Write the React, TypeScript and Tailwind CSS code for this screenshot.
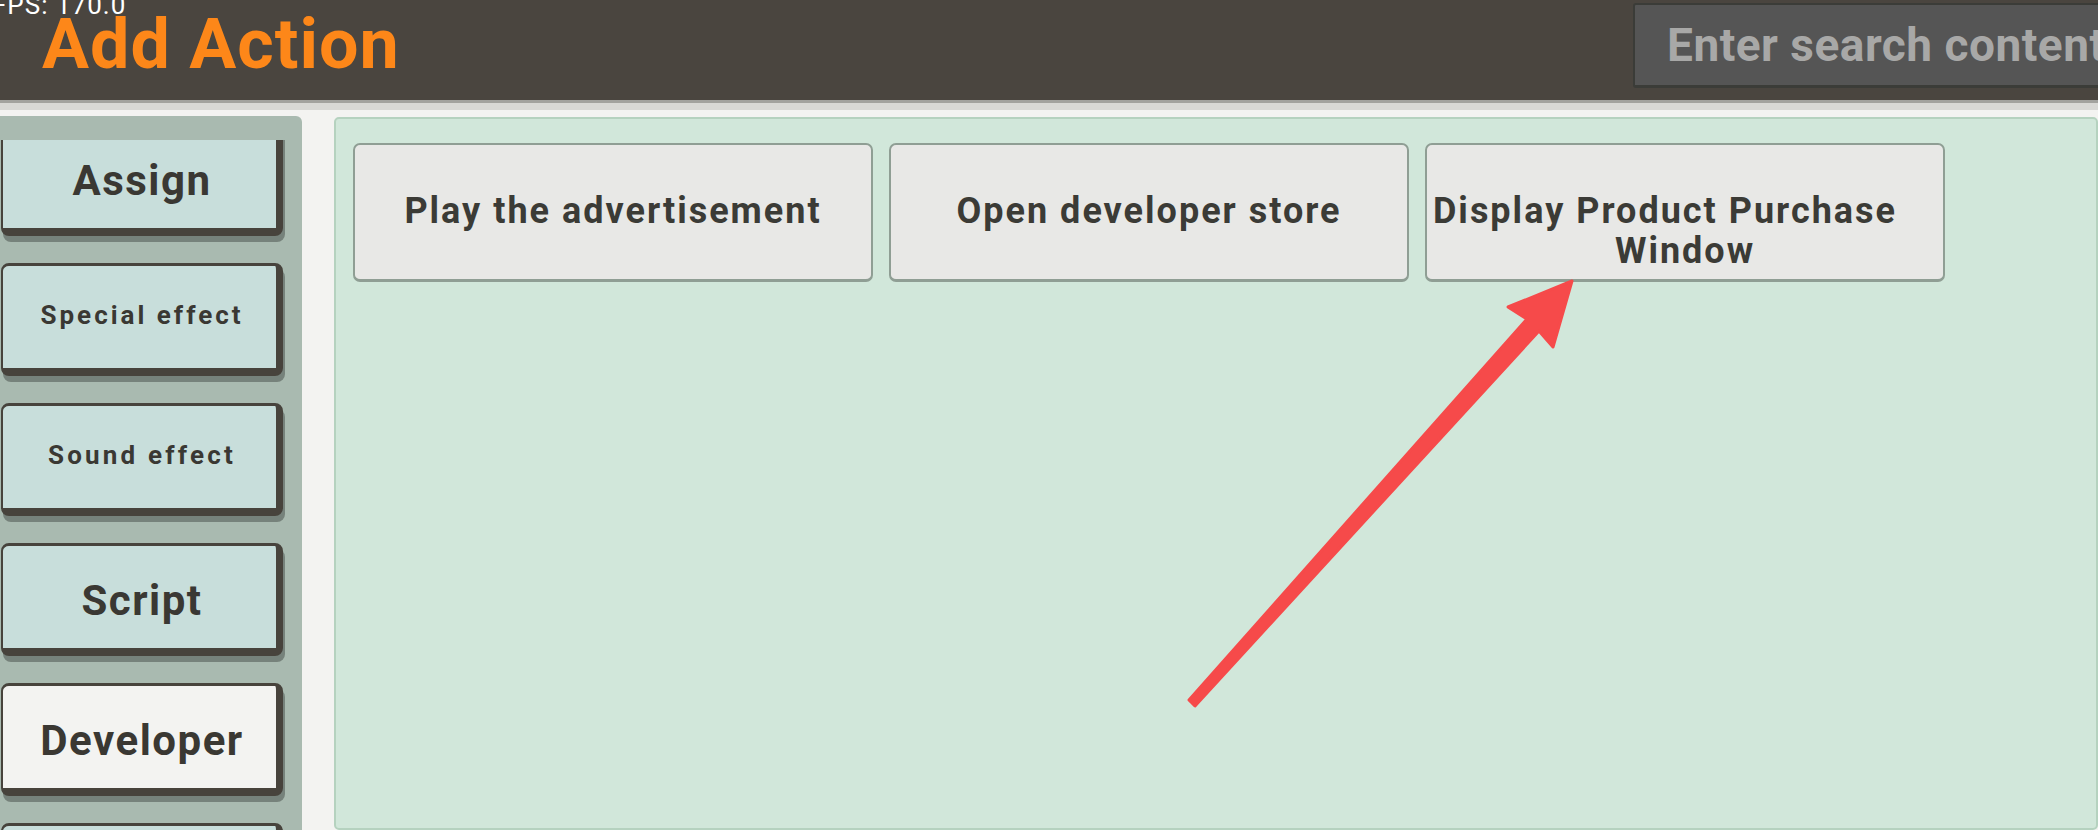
import React from "react";

const sideItems = [
  { label: "Assign", size: "text-[42px] tracking-[1.5px]", pad: "pt-[8px] pl-[5px]" },
  { label: "Special effect", size: "text-[26px] tracking-[3px]", pad: "pb-[5px] pl-[5px]" },
  { label: "Sound effect", size: "text-[26px] tracking-[3.2px]", pad: "pb-[5px] pl-[5px]" },
  { label: "Script", size: "text-[42px] tracking-[1.5px]", pad: "pt-[8px] pl-[5px]" },
  { label: "Developer", size: "text-[42px] tracking-[1.5px]", pad: "pt-[8px] pl-[5px]", active: true },
  { label: "", size: "text-[42px]", pad: "" },
];

function SideButton({
  label,
  size,
  pad,
  active,
}: {
  label: string;
  size: string;
  pad: string;
  active?: boolean;
}) {
  return (
    <div
      className={`ml-[1px] flex h-[113px] w-[282px] shrink-0 items-center justify-center rounded-[8px] border-[#47433c] border-t-[3px] border-l-[2px] border-r-[7px] border-b-[8px] shadow-[2px_6px_0_#76827b] ${pad} ${
        active ? "bg-[#f3f3f1]" : "bg-[#c8dedb]"
      }`}
    >
      <span className={`font-bold text-[#3a3833] leading-none ${size}`}>{label}</span>
    </div>
  );
}

function ActionButton({ children }: { children: React.ReactNode }) {
  return (
    <div className="flex h-[139px] w-[520px] shrink-0 flex-col items-center rounded-[7px] border-2 border-b-[3px] border-[#8f9e94] bg-[#e8e8e6] pt-[46px] text-[36px] font-bold leading-[40px] tracking-[2px] text-[#3b3b36]">
      {children}
    </div>
  );
}

export default function App() {
  return (
    <div className="relative flex h-[830px] w-[2098px] flex-col overflow-hidden bg-[#f3f3f1] font-['Roboto','Liberation_Sans',sans-serif]">
      {/* top bar */}
      <header className="relative flex h-[100px] shrink-0 items-start overflow-hidden bg-[#4a453f]">
        <div className="absolute left-[-8px] top-[-8px] text-[26px] leading-[26px] tracking-[1px] text-white">
          FPS: 170.0
        </div>
        <h1 className="ml-[42px] mt-[9px] text-[70px] font-bold leading-[70px] tracking-[1px] text-[#fd8719]">
          Add Action
        </h1>
        <div className="ml-auto mr-[-40px] mt-[3px] flex h-[85px] w-[505px] items-center rounded-[3px] border-2 border-b-[3px] border-[#3b3c38] bg-[#555555] pl-[32px]">
          <span className="whitespace-nowrap text-[46px] font-bold leading-none tracking-[0.5px] text-[#a8a8a7]">
            Enter search content
          </span>
        </div>
      </header>
      <div className="h-[3px] shrink-0 bg-[#a2a29e]" />
      <div className="h-[7px] shrink-0 bg-[#d8d8d5]" />

      {/* body */}
      <div className="flex min-h-0 flex-1 pt-[6px]">
        <aside className="flex w-[302px] shrink-0 flex-col rounded-tr-[6px] bg-[#a9bab0] pt-[24px]">
          <div className="min-h-0 flex-1 overflow-hidden">
            <div className="mt-[-17px] flex flex-col gap-[27px]">
              {sideItems.map((s, i) => (
                <SideButton key={i} label={s.label} size={s.size} pad={s.pad} active={s.active} />
              ))}
            </div>
          </div>
        </aside>

        <main className="ml-[32px] mt-[1px] flex-1 rounded-[5px] border-2 border-[#b5d2bf] bg-[#d1e7da] pl-[17px] pt-[24px]">
          <div className="flex gap-[16px]">
            <ActionButton>
              <span className="whitespace-nowrap">Play the advertisement</span>
            </ActionButton>
            <ActionButton>
              <span className="whitespace-nowrap">Open developer store</span>
            </ActionButton>
            <ActionButton>
              <span className="mr-[40px] whitespace-nowrap">Display Product Purchase</span>
              <span className="whitespace-nowrap">Window</span>
            </ActionButton>
          </div>
        </main>
      </div>

      {/* annotation arrow */}
      <svg
        className="pointer-events-none absolute left-0 top-0"
        width="2098"
        height="830"
        viewBox="0 0 2098 830"
      >
        <polygon
          points="1572,281 1553,347 1539,331 1195,706 1189,700 1527,319 1508,307"
          fill="#f64a4a"
          stroke="#f64a4a"
          strokeWidth="3"
          strokeLinejoin="round"
        />
      </svg>
    </div>
  );
}
